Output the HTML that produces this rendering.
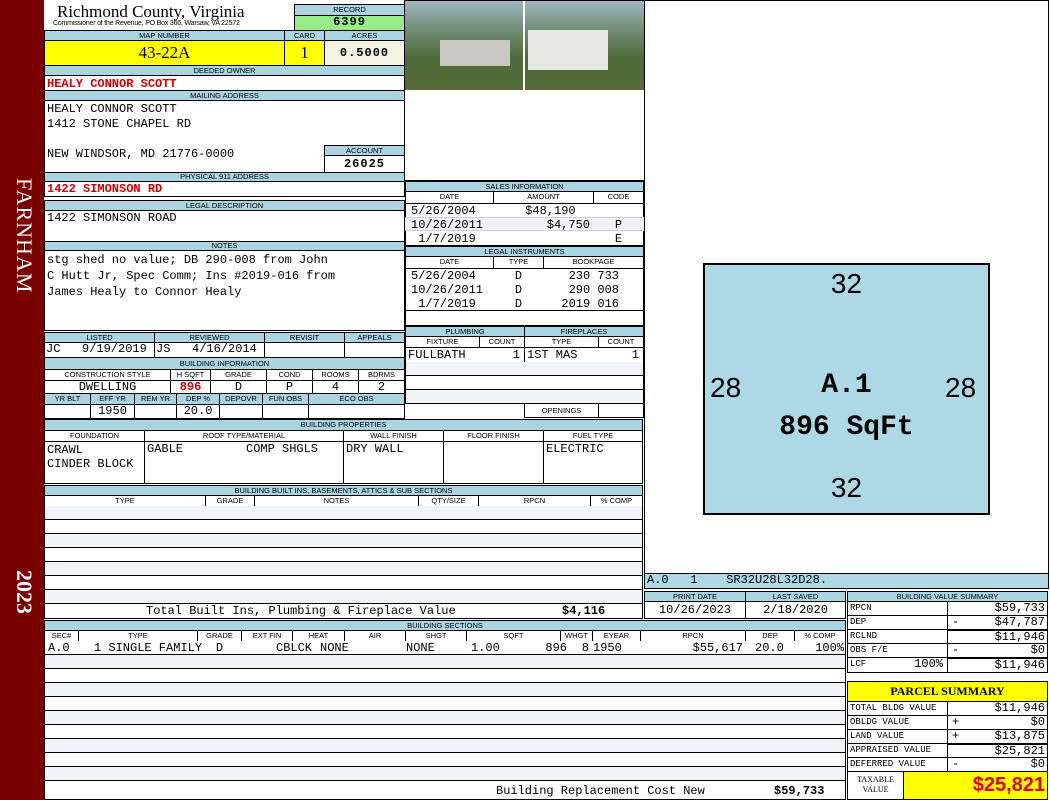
<!DOCTYPE html>
<html><head><meta charset="utf-8"><style>
*{margin:0;padding:0;box-sizing:border-box}
body{width:1050px;height:800px;background:#fff;position:relative;overflow:hidden;font-family:"Liberation Mono",monospace;font-size:12px;color:#000}
.a{position:absolute;overflow:hidden;white-space:nowrap}
.bx{position:absolute;border:1px solid #000}
.h{position:absolute;background:#aad4e2;border:1px solid #000;font-family:"Liberation Sans",sans-serif;font-size:7.5px;text-align:center;line-height:9px;overflow:hidden;white-space:nowrap}
.l{position:absolute;background:#fff;border:1px solid #000;font-family:"Liberation Sans",sans-serif;font-size:7.5px;text-align:center;line-height:9px;overflow:hidden;white-space:nowrap}
.v{position:absolute;border:1px solid #000;font-size:12px;line-height:13px;overflow:hidden;white-space:nowrap;padding:0 2px}
.st{position:absolute;background:#f0f3f8;border-bottom:1px solid #000}
.r{text-align:right}.c{text-align:center}
.red{color:#d00000;font-weight:bold}
</style></head><body>
<!-- sidebar -->
<div class="a" style="left:0;top:0;width:44px;height:800px;background:#7a0000"></div>
<div class="a" style="left:7px;top:178px;width:30px;height:130px;color:#fff;font-family:'Liberation Serif',serif;font-size:22px;writing-mode:vertical-rl;letter-spacing:1px">FARNHAM</div>
<div class="a" style="left:7px;top:570px;width:30px;height:60px;color:#fff;font-family:'Liberation Serif',serif;font-size:22px;font-weight:bold;writing-mode:vertical-rl">2023</div>

<!-- header -->
<div class="a" style="left:57px;top:2px;font-family:'Liberation Serif',serif;font-size:17px">Richmond County, Virginia</div>
<div class="a" style="left:53px;top:20px;font-family:'Liberation Sans',sans-serif;font-size:7px;letter-spacing:-0.2px">Commissioner of the Revenue, PO Box 366, Warsaw, VA 22572</div>
<div class="h" style="left:294px;top:4px;width:111px;height:12px;line-height:10px">RECORD</div>
<div class="v c" style="left:294px;top:15px;width:111px;height:16px;background:#98ec88;font-weight:bold;letter-spacing:1px">6399</div>

<div class="h" style="left:44px;top:30px;width:241px;height:11px">MAP NUMBER</div>
<div class="h" style="left:284px;top:30px;width:41px;height:11px">CARD</div>
<div class="h" style="left:324px;top:30px;width:81px;height:11px">ACRES</div>
<div class="v c" style="left:44px;top:40px;width:241px;height:26px;background:#ffff00;font-family:'Liberation Serif',serif;font-size:17px;line-height:24px">43-22A</div>
<div class="v c" style="left:284px;top:40px;width:41px;height:26px;background:#ffff00;font-family:'Liberation Serif',serif;font-size:17px;line-height:24px">1</div>
<div class="v c" style="left:324px;top:40px;width:81px;height:26px;background:#f4f2e2;font-weight:bold;line-height:24px;letter-spacing:1px">0.5000</div>

<div class="h" style="left:44px;top:65px;width:361px;height:11px">DEEDED OWNER</div>
<div class="v red" style="left:44px;top:75px;width:361px;height:16px;line-height:17px">HEALY CONNOR SCOTT</div>
<div class="h" style="left:44px;top:90px;width:361px;height:11px">MAILING ADDRESS</div>
<div class="v" style="left:44px;top:100px;width:361px;height:73px;line-height:15px;padding-top:1px">HEALY CONNOR SCOTT<br>1412 STONE CHAPEL RD<br><br>NEW WINDSOR, MD 21776-0000</div>
<div class="h" style="left:324px;top:145px;width:81px;height:11px">ACCOUNT</div>
<div class="v c" style="left:324px;top:155px;width:81px;height:18px;font-weight:bold;background:#fff;letter-spacing:1px;line-height:16px">26025</div>
<div class="h" style="left:44px;top:172px;width:361px;height:10px;line-height:8px">PHYSICAL 911 ADDRESS</div>
<div class="v red" style="left:44px;top:181px;width:361px;height:16px;line-height:15px">1422 SIMONSON RD</div>

<div class="h" style="left:44px;top:200px;width:361px;height:11px">LEGAL DESCRIPTION</div>
<div class="v" style="left:44px;top:210px;width:361px;height:32px;padding-top:1px">1422 SIMONSON ROAD</div>
<div class="h" style="left:44px;top:241px;width:361px;height:10px;line-height:8px">NOTES</div>
<div class="v" style="left:44px;top:250px;width:361px;height:81px;line-height:16px;padding-top:1px">stg shed no value; DB 290-008 from John<br>C Hutt Jr, Spec Comm; Ins #2019-016 from<br>James Healy to Connor Healy</div>

<!-- listed -->
<div class="h" style="left:44px;top:332px;width:111px;height:11px">LISTED</div>
<div class="h" style="left:154px;top:332px;width:111px;height:11px">REVIEWED</div>
<div class="h" style="left:264px;top:332px;width:81px;height:11px">REVISIT</div>
<div class="h" style="left:344px;top:332px;width:61px;height:11px">APPEALS</div>
<div class="v" style="left:44px;top:342px;width:111px;height:16px;padding:0 1px">JC&nbsp;&nbsp;&nbsp;9/19/2019</div>
<div class="v" style="left:154px;top:342px;width:111px;height:16px;padding:0 1px">JS&nbsp;&nbsp;&nbsp;4/16/2014</div>
<div class="v" style="left:264px;top:342px;width:81px;height:16px"></div>
<div class="v" style="left:344px;top:342px;width:61px;height:16px"></div>

<div class="h" style="left:44px;top:357px;width:361px;height:13px;line-height:11px">BUILDING INFORMATION</div>
<div class="l" style="left:44px;top:369px;width:127px;height:12px">CONSTRUCTION STYLE</div>
<div class="l" style="left:170px;top:369px;width:41px;height:12px">H SQFT</div>
<div class="l" style="left:210px;top:369px;width:57px;height:12px">GRADE</div>
<div class="l" style="left:266px;top:369px;width:47px;height:12px">COND</div>
<div class="l" style="left:312px;top:369px;width:47px;height:12px">ROOMS</div>
<div class="l" style="left:358px;top:369px;width:47px;height:12px">BDRMS</div>
<div class="v c" style="left:44px;top:380px;width:127px;height:14px">DWELLING</div>
<div class="v c red" style="left:170px;top:380px;width:41px;height:14px">896</div>
<div class="v c" style="left:210px;top:380px;width:57px;height:14px">D</div>
<div class="v c" style="left:266px;top:380px;width:47px;height:14px">P</div>
<div class="v c" style="left:312px;top:380px;width:47px;height:14px">4</div>
<div class="v c" style="left:358px;top:380px;width:47px;height:14px">2</div>
<div class="h" style="left:44px;top:393px;width:47px;height:12px">YR BLT</div>
<div class="h" style="left:90px;top:393px;width:45px;height:12px">EFF YR</div>
<div class="h" style="left:134px;top:393px;width:43px;height:12px">REM YR</div>
<div class="h" style="left:176px;top:393px;width:44px;height:12px">DEP %</div>
<div class="h" style="left:219px;top:393px;width:44px;height:12px">DEPOVR</div>
<div class="h" style="left:262px;top:393px;width:47px;height:12px">FUN OBS</div>
<div class="h" style="left:308px;top:393px;width:97px;height:12px">ECO OBS</div>
<div class="v c" style="left:44px;top:404px;width:47px;height:15px"></div>
<div class="v c" style="left:90px;top:404px;width:45px;height:15px">1950</div>
<div class="v c" style="left:134px;top:404px;width:43px;height:15px"></div>
<div class="v c" style="left:176px;top:404px;width:44px;height:15px">20.0</div>
<div class="v c" style="left:219px;top:404px;width:44px;height:15px"></div>
<div class="v c" style="left:262px;top:404px;width:47px;height:15px"></div>
<div class="v c" style="left:308px;top:404px;width:97px;height:15px"></div>

<!-- photo -->
<div class="a" style="left:405px;top:0;width:239px;height:90px;background:linear-gradient(180deg,#9fb8c4 0%,#6f8a70 35%,#4f6a3a 65%,#556b35 100%)"></div>
<div class="a" style="left:440px;top:40px;width:70px;height:26px;background:#c8c8c0"></div>
<div class="a" style="left:528px;top:30px;width:80px;height:40px;background:#e8e8e2"></div>
<div class="a" style="left:523px;top:0;width:2px;height:90px;background:#fff"></div>
<div class="bx" style="left:404px;top:0;width:241px;height:181px"></div>

<!-- sales -->
<div class="h" style="left:405px;top:181px;width:239px;height:11px">SALES INFORMATION</div>
<div class="l" style="left:405px;top:191px;width:89px;height:13px">DATE</div>
<div class="l" style="left:493px;top:191px;width:101px;height:13px">AMOUNT</div>
<div class="l" style="left:593px;top:191px;width:51px;height:13px">CODE</div>
<div class="v" style="left:405px;top:203px;width:239px;height:43px;line-height:14px;padding:0"></div>
<div class="a" style="left:405px;top:217px;width:239px;height:14px;background:#f0f3f8;border-top:1px solid #ccd;border-bottom:1px solid #ccd"></div>
<div class="a" style="left:411px;top:204px;line-height:14px">5/26/2004<br>10/26/2011<br>&nbsp;1/7/2019</div>
<div class="a r" style="left:493px;top:204px;width:97px;line-height:14px">$48,190&nbsp;&nbsp;<br>$4,750<br>&nbsp;</div>
<div class="a c" style="left:593px;top:204px;width:51px;line-height:14px">&nbsp;<br>P<br>E</div>
<div class="h" style="left:405px;top:246px;width:239px;height:11px">LEGAL INSTRUMENTS</div>
<div class="l" style="left:405px;top:256px;width:89px;height:13px">DATE</div>
<div class="l" style="left:493px;top:256px;width:51px;height:13px">TYPE</div>
<div class="l" style="left:543px;top:256px;width:101px;height:13px">BOOKPAGE</div>
<div class="v" style="left:405px;top:268px;width:239px;height:58px;padding:0"></div>
<div class="a" style="left:405px;top:310px;width:239px;height:1px;background:#000"></div>
<div class="a" style="left:411px;top:269px;line-height:14px">5/26/2004<br>10/26/2011<br>&nbsp;1/7/2019</div>
<div class="a c" style="left:493px;top:269px;width:51px;line-height:14px">D<br>D<br>D</div>
<div class="a r" style="left:543px;top:269px;width:76px;line-height:14px">230 733<br>290 008<br>2019 016</div>

<!-- plumbing -->
<div class="h" style="left:405px;top:326px;width:120px;height:11px">PLUMBING</div>
<div class="h" style="left:524px;top:326px;width:120px;height:11px">FIREPLACES</div>
<div class="l" style="left:405px;top:336px;width:75px;height:12px">FIXTURE</div>
<div class="l" style="left:479px;top:336px;width:46px;height:12px">COUNT</div>
<div class="l" style="left:524px;top:336px;width:75px;height:12px">TYPE</div>
<div class="l" style="left:598px;top:336px;width:46px;height:12px">COUNT</div>
<div class="v" style="left:405px;top:347px;width:120px;height:16px;padding-top:1px">FULLBATH<span style="position:absolute;right:4px">1</span></div>
<div class="v" style="left:524px;top:347px;width:120px;height:16px;padding-top:1px">1ST MAS<span style="position:absolute;right:4px">1</span></div>
<div class="st" style="left:405px;top:362px;width:120px;height:14px;border-left:1px solid #000;border-right:1px solid #000"></div>
<div class="st" style="left:524px;top:362px;width:120px;height:14px;border-right:1px solid #000"></div>
<div class="st" style="left:405px;top:376px;width:120px;height:14px;background:#fff;border-left:1px solid #000;border-right:1px solid #000"></div>
<div class="st" style="left:524px;top:376px;width:120px;height:14px;background:#fff;border-right:1px solid #000"></div>
<div class="st" style="left:405px;top:390px;width:120px;height:14px;border-left:1px solid #000;border-right:1px solid #000"></div>
<div class="st" style="left:524px;top:390px;width:120px;height:14px;border-right:1px solid #000"></div>
<div class="l" style="left:524px;top:403px;width:75px;height:15px;line-height:13px">OPENINGS</div>
<div class="l" style="left:598px;top:403px;width:46px;height:15px"></div>

<!-- building properties -->
<div class="h" style="left:44px;top:419px;width:599px;height:12px">BUILDING PROPERTIES</div>
<div class="l" style="left:44px;top:430px;width:101px;height:12px">FOUNDATION</div>
<div class="l" style="left:144px;top:430px;width:200px;height:12px">ROOF TYPE/MATERIAL</div>
<div class="l" style="left:343px;top:430px;width:101px;height:12px">WALL FINISH</div>
<div class="l" style="left:443px;top:430px;width:101px;height:12px">FLOOR FINISH</div>
<div class="l" style="left:543px;top:430px;width:100px;height:12px">FUEL TYPE</div>
<div class="v" style="left:44px;top:441px;width:101px;height:43px;line-height:14px;padding-top:1px">CRAWL<br>CINDER BLOCK</div>
<div class="v" style="left:144px;top:441px;width:200px;height:43px;padding-top:1px">GABLE<span style="position:absolute;left:101px">COMP SHGLS</span></div>
<div class="v" style="left:343px;top:441px;width:101px;height:43px;padding-top:1px">DRY WALL</div>
<div class="v" style="left:443px;top:441px;width:101px;height:43px"></div>
<div class="v" style="left:543px;top:441px;width:100px;height:43px;padding-top:1px">ELECTRIC</div>

<!-- built ins -->
<div class="h" style="left:44px;top:485px;width:599px;height:11px">BUILDING BUILT INS, BASEMENTS, ATTICS &amp; SUB SECTIONS</div>
<div class="l" style="left:44px;top:495px;width:162px;height:12px">TYPE</div>
<div class="l" style="left:205px;top:495px;width:50px;height:12px">GRADE</div>
<div class="l" style="left:254px;top:495px;width:165px;height:12px">NOTES</div>
<div class="l" style="left:418px;top:495px;width:61px;height:12px">QTY/SIZE</div>
<div class="l" style="left:478px;top:495px;width:113px;height:12px">RPCN</div>
<div class="l" style="left:590px;top:495px;width:53px;height:12px">% COMP</div>
<div class="bx" style="left:44px;top:506px;width:599px;height:113px;border-top:0"></div>
<div class="st" style="left:45px;top:506px;width:597px;height:14px"></div>
<div class="st" style="left:45px;top:520px;width:597px;height:14px;background:#fff"></div>
<div class="st" style="left:45px;top:534px;width:597px;height:14px"></div>
<div class="st" style="left:45px;top:548px;width:597px;height:14px;background:#fff"></div>
<div class="st" style="left:45px;top:562px;width:597px;height:14px"></div>
<div class="st" style="left:45px;top:576px;width:597px;height:14px;background:#fff"></div>
<div class="st" style="left:45px;top:590px;width:597px;height:14px"></div>
<div class="a" style="left:146px;top:604px">Total Built Ins, Plumbing &amp; Fireplace Value</div>
<div class="a" style="left:562px;top:604px;font-weight:bold">$4,116</div>

<!-- building sections -->
<div class="h" style="left:44px;top:620px;width:802px;height:11px">BUILDING SECTIONS</div>
<div class="l" style="left:44px;top:630px;width:35px;height:12px">SEC#</div>
<div class="l" style="left:78px;top:630px;width:120px;height:12px">TYPE</div>
<div class="l" style="left:197px;top:630px;width:45px;height:12px">GRADE</div>
<div class="l" style="left:241px;top:630px;width:52px;height:12px">EXT FIN</div>
<div class="l" style="left:292px;top:630px;width:53px;height:12px">HEAT</div>
<div class="l" style="left:344px;top:630px;width:62px;height:12px">AIR</div>
<div class="l" style="left:405px;top:630px;width:62px;height:12px">SHGT</div>
<div class="l" style="left:466px;top:630px;width:95px;height:12px">SQFT</div>
<div class="l" style="left:560px;top:630px;width:33px;height:12px">WHGT</div>
<div class="l" style="left:592px;top:630px;width:49px;height:12px">EYEAR</div>
<div class="l" style="left:640px;top:630px;width:106px;height:12px">RPCN</div>
<div class="l" style="left:745px;top:630px;width:50px;height:12px">DEP</div>
<div class="l" style="left:794px;top:630px;width:52px;height:12px">% COMP</div>
<div class="bx" style="left:44px;top:641px;width:802px;height:159px;border-top:0"></div>
<div class="st" style="left:45px;top:641px;width:800px;height:14px;background:#fff"></div>
<div class="st" style="left:45px;top:655px;width:800px;height:14px"></div>
<div class="st" style="left:45px;top:669px;width:800px;height:14px;background:#fff"></div>
<div class="st" style="left:45px;top:683px;width:800px;height:14px"></div>
<div class="st" style="left:45px;top:697px;width:800px;height:14px;background:#fff"></div>
<div class="st" style="left:45px;top:711px;width:800px;height:14px"></div>
<div class="st" style="left:45px;top:725px;width:800px;height:14px;background:#fff"></div>
<div class="st" style="left:45px;top:739px;width:800px;height:14px"></div>
<div class="st" style="left:45px;top:753px;width:800px;height:14px;background:#fff"></div>
<div class="st" style="left:45px;top:767px;width:800px;height:14px"></div>
<div class="a" style="left:48px;top:641px">A.0</div>
<div class="a" style="left:94px;top:641px">1 SINGLE FAMILY</div>
<div class="a c" style="left:197px;top:641px;width:45px">D</div>
<div class="a" style="left:276px;top:641px">CBLCK</div>
<div class="a" style="left:320px;top:641px">NONE</div>
<div class="a" style="left:406px;top:641px">NONE</div>
<div class="a" style="left:471px;top:641px">1.00</div>
<div class="a r" style="left:500px;top:641px;width:67px">896</div>
<div class="a r" style="left:560px;top:641px;width:29px">8</div>
<div class="a" style="left:593px;top:641px">1950</div>
<div class="a r" style="left:640px;top:641px;width:103px">$55,617</div>
<div class="a" style="left:755px;top:641px">20.0</div>
<div class="a r" style="left:794px;top:641px;width:50px">100%</div>
<div class="a" style="left:496px;top:784px">Building Replacement Cost New</div>
<div class="a" style="left:774px;top:784px;font-weight:bold">$59,733</div>

<!-- sketch -->
<div class="bx" style="left:644px;top:0;width:405px;height:574px"></div>
<div class="a" style="left:703px;top:263px;width:287px;height:252px;background:#add8e6;border:2px solid #000"></div>
<div class="a c" style="left:703px;top:268px;width:287px;font-family:'Liberation Sans',sans-serif;font-size:28px">32</div>
<div class="a c" style="left:703px;top:472px;width:287px;font-family:'Liberation Sans',sans-serif;font-size:28px">32</div>
<div class="a" style="left:710px;top:372px;font-family:'Liberation Sans',sans-serif;font-size:28px">28</div>
<div class="a" style="left:945px;top:372px;font-family:'Liberation Sans',sans-serif;font-size:28px">28</div>
<div class="a c" style="left:703px;top:370px;width:287px;font-size:28px;font-weight:bold">A.1</div>
<div class="a c" style="left:703px;top:412px;width:287px;font-size:28px;font-weight:bold">896 SqFt</div>
<div class="v" style="left:644px;top:573px;width:405px;height:16px;background:#add8e6;font-size:12px">A.0&nbsp;&nbsp;&nbsp;1&nbsp;&nbsp;&nbsp;&nbsp;SR32U28L32D28.</div>

<div class="h" style="left:644px;top:591px;width:102px;height:11px">PRINT DATE</div>
<div class="h" style="left:745px;top:591px;width:101px;height:11px">LAST SAVED</div>
<div class="v c" style="left:644px;top:601px;width:102px;height:18px;font-size:12px;line-height:16px">10/26/2023</div>
<div class="v c" style="left:745px;top:601px;width:101px;height:18px;font-size:12px;line-height:16px">2/18/2020</div>

<!-- value summary -->
<div class="h" style="left:847px;top:591px;width:201px;height:11px">BUILDING VALUE SUMMARY</div>
<div class="v" style="left:847px;top:601px;width:101px;height:15px;font-size:9px">RPCN</div><div class="v r" style="left:947px;top:601px;width:101px;height:15px">$59,733</div>
<div class="v" style="left:847px;top:615px;width:101px;height:15px;font-size:9px">DEP</div><div class="v r" style="left:947px;top:615px;width:101px;height:15px"><span style="position:absolute;left:4px">-</span>$47,787</div>
<div class="v" style="left:847px;top:629px;width:101px;height:15px;font-size:9px">RCLND</div><div class="v r" style="left:947px;top:629px;width:101px;height:15px;border-top:2px solid #000">$11,946</div>
<div class="v" style="left:847px;top:643px;width:101px;height:15px;font-size:9px">OBS F/E</div><div class="v r" style="left:947px;top:643px;width:101px;height:15px"><span style="position:absolute;left:4px">-</span>$0</div>
<div class="v" style="left:847px;top:657px;width:101px;height:16px;font-size:9px">LCF<span style="position:absolute;right:4px;font-size:12px">100%</span></div><div class="v r" style="left:947px;top:657px;width:101px;height:16px;border-top:2px solid #000">$11,946</div>

<!-- parcel summary -->
<div class="v c" style="left:847px;top:681px;width:201px;height:21px;background:#ffff00;font-weight:bold;line-height:19px;font-family:'Liberation Serif',serif;font-size:12px">PARCEL SUMMARY</div>
<div class="v" style="left:847px;top:701px;width:101px;height:15px;font-size:9px">TOTAL BLDG VALUE</div><div class="v r" style="left:947px;top:701px;width:101px;height:15px">$11,946</div>
<div class="v" style="left:847px;top:715px;width:101px;height:15px;font-size:9px">OBLDG VALUE</div><div class="v r" style="left:947px;top:715px;width:101px;height:15px"><span style="position:absolute;left:4px">+</span>$0</div>
<div class="v" style="left:847px;top:729px;width:101px;height:15px;font-size:9px">LAND VALUE</div><div class="v r" style="left:947px;top:729px;width:101px;height:15px"><span style="position:absolute;left:4px">+</span>$13,875</div>
<div class="v" style="left:847px;top:743px;width:101px;height:15px;font-size:9px">APPRAISED VALUE</div><div class="v r" style="left:947px;top:743px;width:101px;height:15px;border-top:2px solid #000">$25,821</div>
<div class="v" style="left:847px;top:757px;width:101px;height:15px;font-size:9px">DEFERRED VALUE</div><div class="v r" style="left:947px;top:757px;width:101px;height:15px"><span style="position:absolute;left:4px">-</span>$0</div>
<div class="v c" style="left:847px;top:771px;width:57px;height:29px;font-size:8px;line-height:10px;font-family:'Liberation Serif',serif;padding-top:3px">TAXABLE<br>VALUE</div>
<div class="v r" style="left:903px;top:771px;width:145px;height:29px;background:#ffff00;color:#e00000;font-family:'Liberation Sans',sans-serif;font-weight:bold;font-size:20px;line-height:26px">$25,821</div>
</body></html>
